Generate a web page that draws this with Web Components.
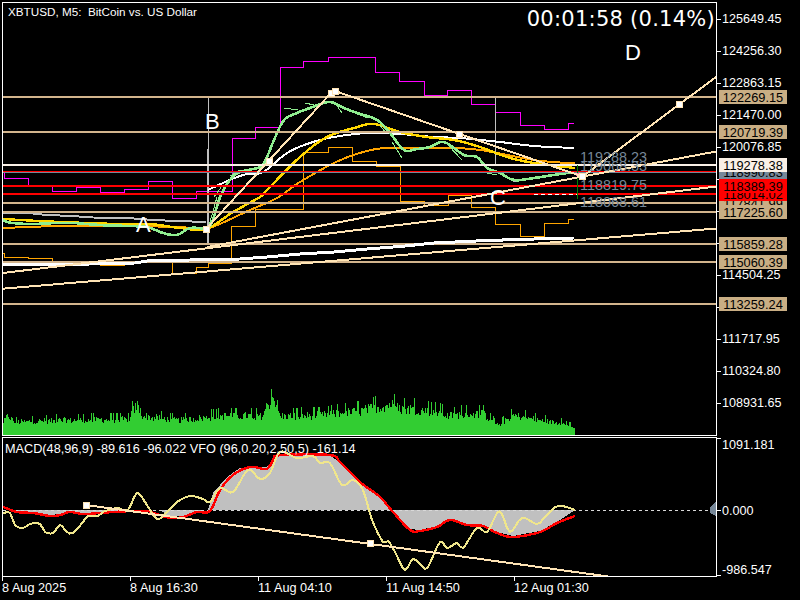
<!DOCTYPE html>
<html lang="en">
<head>
<meta charset="utf-8">
<title>XBTUSD M5</title>
<style>
html,body{margin:0;padding:0;background:#000;color:#fff;font-family:"Liberation Sans",Arial,sans-serif;}
</style>
</head>
<body>
<mt-terminal>
  <main-chart slot="main"></main-chart>
  <price-axis slot="main-axis" ticks="125649.45:19,124256.30:51,122863.15:83,121470.00:115,120076.85:147,118683.70:179,117290.55:211,115897.40:243,114504.25:275,113111.10:307,111717.95:339,110324.80:371,108931.65:403" offset="2">
    <price-tag y="97" bg="#C9AE84">122269.15</price-tag>
    <price-tag y="132" bg="#C9AE84">120719.39</price-tag>
    <price-tag y="172" bg="#778899">118990.83</price-tag>
    <price-tag y="165" bg="#FAF0E6">119278.38</price-tag>
    <price-tag y="203" bg="#C9AE84">117841.99</price-tag>
    <price-tag y="194" bg="#FF0000">118014.02</price-tag>
    <price-tag y="186" bg="#FF0000">118389.39</price-tag>
    <price-tag y="212" bg="#C9AE84">117225.60</price-tag>
    <price-tag y="244" bg="#C9AE84">115859.28</price-tag>
    <price-tag y="262" bg="#C9AE84">115060.39</price-tag>
    <price-tag y="304" bg="#C9AE84">113259.24</price-tag>
  </price-axis>
  <macd-chart slot="sub"></macd-chart>
  <price-axis slot="sub-axis" ticks="1091.181:445:438,0.000:510.5:510.5,-986.547:569.5:575" offset="437"></price-axis>
  <time-axis slot="time">
    <time-tick>8 Aug 2025</time-tick>
    <time-tick>8 Aug 16:30</time-tick>
    <time-tick>11 Aug 04:10</time-tick>
    <time-tick>11 Aug 14:50</time-tick>
    <time-tick>12 Aug 01:30</time-tick>
  </time-axis>
</mt-terminal>
<script>
const def=(name,html,extra)=>{
  customElements.define(name,class extends HTMLElement{
    constructor(){super();this.attachShadow({mode:'open'}).innerHTML=html;if(extra)extra.call(this);}
  });
};
def('mt-terminal',`<style>
:host{display:grid;grid-template-columns:715px 83px;grid-template-rows:434px 140px 23px;row-gap:1px;padding:2px 0 0 2px;width:798px;height:598px;box-sizing:border-box;background:#000;overflow:hidden}
.pane{border:1px solid #fff;box-sizing:border-box;min-width:0;min-height:0;overflow:hidden;position:relative}
.time{grid-column:1 / span 2;margin-top:-1px}
</style>
<div class="pane"><slot name="main"></slot></div><div><slot name="main-axis"></slot></div>
<div class="pane"><slot name="sub"></slot></div><div><slot name="sub-axis"></slot></div>
<div class="time"><slot name="time"></slot></div>`);

const smooth=(s)=>{
  const p=s.trim().split(/\s+/).map(q=>q.split(',').map(Number));const out=[];
  for(let i=0;i<p.length-1;i++){
    const a=p[Math.max(i-1,0)],b=p[i],c=p[i+1],d=p[Math.min(i+2,p.length-1)];
    const n=Math.max(2,Math.ceil((c[0]-b[0])/3));
    for(let k=0;k<n;k++){const t=k/n,t2=t*t,t3=t2*t;
      const f=j=>0.5*((2*b[j])+(-a[j]+c[j])*t+(2*a[j]-5*b[j]+4*c[j]-d[j])*t2+(-a[j]+3*b[j]-3*c[j]+d[j])*t3);
      out.push(f(0).toFixed(1)+','+f(1).toFixed(1));}
  }
  out.push(p[p.length-1].join(','));return out.join(' ');
};
const P=(c,w,pts,extra='')=>`<polyline fill="none" stroke="${c}" stroke-width="${w}" points="${pts}" ${extra}/>`;
const S=(c,w,pts)=>P(c,w,smooth(pts));
const H=(c,w,y)=>`<line x1="3" x2="716" y1="${y}" y2="${y}" stroke="${c}" stroke-width="${w}"/>`;
const L=(c,w,a,b,cc,d)=>`<line x1="${a}" y1="${b}" x2="${cc}" y2="${d}" stroke="${c}" stroke-width="${w}"/>`;
const N=(x,y)=>`<rect x="${x-3}" y="${y-3}" width="6" height="6" fill="#fff" stroke="#FFE4B5" stroke-width="1"/>`;
const T=(s,x,y,fs,c='#fff')=>`<text x="${x}" y="${y}" font-size="${fs}" fill="${c}" text-anchor="start">${s}</text>`;

function volume(){
  const env=[[3,18],[8,28],[14,18],[40,20],[100,22],[128,22],[132,34],[137,42],[142,28],[150,25],[180,21],[220,27],[262,27],[268,46],[273,46],[280,27],[320,28],[360,34],[391,44],[400,36],[407,38],[427,34],[440,32],[447,27],[463,30],[483,30],[497,14],[513,28],[547,19],[570,16],[575,8]];
  let seed=12345;const r=()=>{seed=(seed*1103515245+12345)&0x7fffffff;return seed/0x7fffffff};
  let d='';
  for(let x=3;x<575;x++){
    let i=0;while(i<env.length-2&&env[i+1][0]<x)i++;
    const [a,b]=env[i],[c,e]=env[i+1];
    const v=b+(e-b)*(x-a)/(c-a);
    const q=r();
    const h=Math.round(v*(q>0.88?1:0.55+0.3*r()));
    d+=`M${x} 435V${435-h}H${x+1}V435Z`;
  }
  return `<path d="${d}" fill="#32CD32"/>`;
}

const mainSvg=`<svg xmlns="http://www.w3.org/2000/svg" width="713" height="432" viewBox="3 3 713 432" shape-rendering="crispEdges">
${volume()}
${P('#FF00FF',1,'3,172 4,172 4,178.5 28,178.5 28,185.5 52,185.5 52,191.5 76,191.5 76,187.5 100,187.5 100,192.5 124,192.5 124,189.5 148,189.5 148,181.5 172,181.5 172,198.5 196,198.5 196,191.5 232,191.5 232,138.5 255.5,138.5 255.5,127.5 280,127.5 280,67.5 303.5,67.5 303.5,61.5 328,61.5 328,57.5 375.5,57.5 375.5,72.5 399.5,72.5 399.5,81.5 424,81.5 424,95.5 447.5,95.5 447.5,90.5 471.5,90.5 471.5,104.5 495.5,104.5 495.5,112.5 520,112.5 520,125.5 544,125.5 544,129.5 568,129.5 568,123.5 574,123.5')}
${P('#FFA500',1,'3,253 4,253 4,257.5 28,257.5 28,258.5 52,258.5 52,263.5 100,263.5 100,265.5 124,265.5 124,261.5 172,261.5 172,273.5 196,273.5 196,267.5 208,267.5 208,263.5 231.5,263.5 231.5,226.5 255.5,226.5 255.5,209.5 303.5,209.5 303.5,152.5 328,152.5 328,147.5 352,147.5 352,161.5 376,161.5 376,166.5 400,166.5 400,201.5 424,201.5 424,205.5 448,205.5 448,195.5 471.5,195.5 471.5,207.5 495.5,207.5 495.5,224.5 520,224.5 520,236.5 544,236.5 544,223.5 568,223.5 568,219.5 574,219.5')}
${P('#C0C0C0',1,'208,97 208,149 207,149 207,243')}
${L('#C0C0C0',1,208,149,208,243)}
${L('#C0C0C0',1,495.5,97,495.5,165)}
${P('#C0C0C0',2,'3,213 33,213.5 47,215 72,216 93,217.5 127,218 153,220 177,221 206,222')}
${S('#FFFFFF',2,'208,190 223,183 243,175 263,172 287,153 310,143 334,137 367,133 400,134 434,137 460,138 500,142 534,146 574,148')}
${P('#C0C0C0',2,'503,175 514,181 534,178 575,172')}
${S('#FFA500',2,'3,228 60,226 120,226 180,227 206,229 250,210 277,198 300,182 334,163 360,153 384,148 417,148 454,148 480,150 507,155 534,160 547,161.5 575,163.5')}
${S('#FFD700',2.4,'3,219 60,222 120,224 150,224 180,228 206,229 233,212 260,197 267,190 300,157 327,137 354,128 374,124 400,132 427,137 454,140 480,147 507,157 534,163 575,168')}
${S('#90EE90',2.6,'3,220 10,222.7 30,224 57,223 73,223 100,225 127,226 147,227 163,233 177,235 190,228 207,228 213,220 220,197 230,180 240,172 260,167 267,157 274,140 284,120 297,113 310,108 329,102 344,108 357,113 377,120 390,133 404,150 417,149 430,147 444,142 464,155 477,157 487,168 500,173 514,180 534,178 567,173 577,173')}
${[[208,229,217,197],[214,197,222,186],[230,176,240,170],[240,170,252,171],[284,108,298,110],[305,103,314,105],[335,103,342,113],[354,112,367,118],[380,125,385,132],[392,142,402,158],[448,145,462,160],[487,173,497,175]].map(a=>L('#90EE90',1,...a)).join('')}
${H('#FF0000',1,171.5)}${H('#778899',1,172.5)}
${H('#D2B48C',2,97)}${H('#D2B48C',2,132)}${H('#FAF0E6',2,165)}
${H('#FF0000',2,186)}${H('#FF0000',2,194)}
${H('#D2B48C',2,203)}${H('#D2B48C',2,212)}${H('#D2B48C',2,244)}${H('#D2B48C',2,262)}${H('#D2B48C',2,304)}
${P('#FFFFFF',3,'3,265 90,264 135,263 147,261 190,260 240,259 267,257 300,254 334,252 367,249 400,246.5 434,243 487,240.5 534,239 574,238')}
<line x1="534" x2="577" y1="194" y2="194" stroke="#fff" stroke-width="1" stroke-dasharray="4 3"/>
${L('#008000',1,577.5,165,577.5,199)}
<rect x="576" y="173" width="3" height="3" fill="#FF69B4"/>
${L('#FFE4B5',2,3,288.7,716,228.5)}
${L('#FFE4B5',2,3,273,716,186.5)}
${L('#FFE4B5',2,207,247,716,151.5)}
${L('#FFE4B5',2,206,229,331,93)}
${L('#FFE4B5',2,335,91,582.5,176.5)}
${L('#FFE4B5',2,582.5,176.5,716,77)}
${N(206,229)}${N(269,161)}${N(331,93)}${N(335,91)}${N(459,134.5)}${N(582.5,176.5)}${N(679,104)}
<g shape-rendering="auto">
${T('A',136,232,22)}${T('B',205,129,22)}${T('C',490,205,22)}${T('D',625,60,22)}
${T('119288.23',580,162,14.4,'#778899')}${T('119068.33',580,171,14.4,'#778899')}${T('118819.75',580,190,14.4,'#778899')}${T('118068.61',580,207,14.4,'#778899')}
</g>
</svg>`;
def('main-chart',`<style>
:host{display:block;position:relative;width:713px;height:432px}
svg{display:block}
text{font-family:"Liberation Sans",sans-serif}
.title{position:absolute;left:5px;top:2px;font:11.7px/14px "Liberation Sans",sans-serif;white-space:pre;color:#fff}
.timer{position:absolute;right:1px;top:3px;font:21px/26px "DejaVu Sans",sans-serif;letter-spacing:.26px;color:#fff;white-space:pre}
</style>${mainSvg}<div class="title">XBTUSD, M5:  BitCoin vs. US Dollar</div><div class="timer">00:01:58 (0.14%)</div>`);

const red='3,507 17,512 33,513 50,516 60,515 70,512 83,514 100,513 113,512 133,511 147,511 157,514 170,518 183,517 197,512 210,511 220,490 233,475 250,467 267,469 273,460 280,455 330,455 340,462 360,482 380,497 393,512 410,530 420,531 437,527 450,520 467,525 483,526 497,533 513,537 540,532 557,523 575,516';
const area='3,510 17,511 33,512 50,515 60,514 70,511 83,513 100,512 113,511 133,510 160,510 170,517 183,516 197,511 208,510 213,493 227,477 240,468 267,467 277,455 330,455 340,463 360,483 380,498 393,513 410,529 420,530 437,526 450,519 467,524 483,525 497,532 513,536 540,531 557,522 575,510';
const macdSvg=`<svg xmlns="http://www.w3.org/2000/svg" width="713" height="138" viewBox="3 438 713 138" shape-rendering="crispEdges">
<polygon points="${area}" fill="#C0C0C0"/>
<line x1="3" x2="713" y1="510.5" y2="510.5" stroke="#D8D8D8" stroke-width="1" stroke-dasharray="3 3"/>
<polygon points="710,508 710,513 716,516 716,501" fill="#778899"/>
${S('#FF0000',2.4,red)}
${S('#F0E68C',2,'3,513 10,513 15,525 23,528 30,524 40,524 45,532 53,533 60,525 67,532 73,533 83,522 88,516 98,516 103,512 117,508 128,510 137,493 147,505 157,519 167,512 177,502 190,496 203,499 210,502 220,488 233,492 248,470 260,479 270,473 280,452 297,458 313,456 320,463 330,463 342,485 353,480 363,490 372,520 383,542 388,541 395,552 405,570 413,559 423,567 428,567 440,542 447,548 457,543 463,548 477,528 487,532 497,513 502,514 510,532 522,518 537,524 545,517 558,506 575,510')}
${L('#FFE4B5',2,86,505,608,576.5)}
${N(86,505)}${N(370,543)}
</svg>`;
def('macd-chart',`<style>
:host{display:block;position:relative;width:713px;height:138px}
svg{display:block}
.lab{position:absolute;left:2px;top:4px;font:12.7px/14px "Liberation Sans",sans-serif;white-space:pre;color:#fff}
</style>${macdSvg}<div class="lab">MACD(48,96,9) -89.616 -96.022 VFO (96,0.20,2.50,5) -161.14</div>`);

customElements.define('price-axis',class extends HTMLElement{
  constructor(){super();
    const off=+this.getAttribute('offset');
    const ticks=this.getAttribute('ticks').split(',').map(s=>s.split(':'));
    this.attachShadow({mode:'open'}).innerHTML=`<style>
:host{display:block;position:relative;width:83px;height:100%;font:12.6px/14px "Liberation Sans",sans-serif;color:#fff}
.t{position:absolute;left:5px;white-space:pre;height:14px}
.m{position:absolute;left:0;width:4px;height:1px;background:#fff}
</style>${ticks.map(([v,y,my])=>{const ty=+y-off-7,my2=Math.floor(+(my||y))-off;return `<div class="m" style="top:${my2}px"></div><div class="t" style="top:${ty}px">${v}</div>`}).join('')}<slot></slot>`;
  }
});
customElements.define('price-tag',class extends HTMLElement{
  constructor(){super();
    const y=+this.getAttribute('y'),bg=this.getAttribute('bg');
    this.attachShadow({mode:'open'}).innerHTML=`<style>
:host{position:absolute;left:2px;top:${y-2-7}px;width:68px;height:14px;background:${bg};color:#000;font:12.8px/15px "Liberation Sans",sans-serif;display:block;text-align:center;overflow:hidden}
</style><slot></slot>`;
  }
});
def('time-axis',`<style>
:host{display:flex;color:#fff;font:12.7px/14px "Liberation Sans",sans-serif}
</style><slot></slot>`);
def('time-tick',`<style>
:host{display:block;flex:0 0 128px;box-sizing:border-box;position:relative;padding-top:4px;white-space:pre}
:host::before{content:"";position:absolute;left:0;top:0;width:1px;height:4px;background:#fff}
</style><slot></slot>`);
</script>
</body>
</html>
